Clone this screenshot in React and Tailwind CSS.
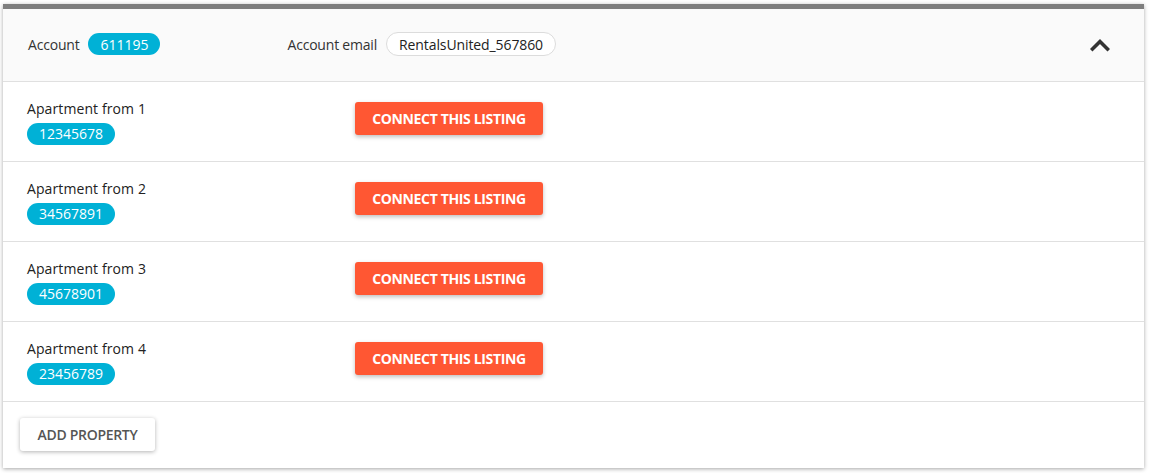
import React from "react";

const rows = [
  { name: "Apartment from 1", id: "12345678" },
  { name: "Apartment from 2", id: "34567891" },
  { name: "Apartment from 3", id: "45678901" },
  { name: "Apartment from 4", id: "23456789" },
];

export default function App() {
  return (
    <div className="w-[1150px] h-[473px] bg-white pt-[4px] pl-[3px]" style={{ fontFamily: '"Open Sans", "Noto Sans", sans-serif' }}>
      <div className="w-[1141px] h-[464px] bg-white border-t-[5px] border-[#7f7f7f] shadow-[0_1px_4px_rgba(0,0,0,0.35)] flex flex-col">
        <div className="h-[73px] bg-[#fafafa] border-b border-[#e0e0e0] flex items-center pl-[25px] pr-[34px] pb-[2px] text-[14px] text-[#333]">
          <span className="tracking-[-0.2px]">Account</span>
          <span className="ml-[9px] h-[22px] px-[12px] rounded-full bg-[#00b1d6] text-white flex items-center text-[14px]">611195</span>
          <span className="ml-[127px] tracking-[-0.2px]">Account email</span>
          <span className="ml-[9px] h-[24px] px-[12px] rounded-full border border-[#dcdcdc] bg-white text-[#222] flex items-center text-[14px] font-medium tracking-[-0.1px]">RentalsUnited_567860</span>
          <div className="flex-1" />
          <svg width="20" height="14" viewBox="0 0 20 14" className="mt-[1px]">
            <polyline points="2.5,11 10,3.5 17.5,11" fill="none" stroke="#333" strokeWidth="3.6" strokeLinecap="square" />
          </svg>
        </div>
        {rows.map((r) => (
          <div key={r.id} className="h-[80px] border-b border-[#e0e0e0] flex items-center pl-[24px] text-[#222]">
            <div className="w-[328px] flex flex-col items-start pt-[1px]">
              <span className="text-[14px] leading-[18px] tracking-[0.1px]">{r.name}</span>
              <span className="mt-[5px] h-[22px] px-[12px] rounded-full bg-[#00b1d6] text-white flex items-center text-[14px]">{r.id}</span>
            </div>
            <button className="h-[33px] w-[188px] -mt-[7px] rounded-[3px] bg-[#ff5733] text-white text-[14px] font-bold uppercase tracking-[-0.35px] shadow-[0_2px_4px_rgba(0,0,0,0.25)]">
              Connect this listing
            </button>
          </div>
        ))}
        <div className="flex-1 flex items-center pl-[17px] pb-[1px]">
          <button className="h-[33px] w-[135px] rounded-[3px] bg-white text-[#555] text-[14px] font-semibold uppercase tracking-[-0.3px] shadow-[0_1px_4px_rgba(0,0,0,0.3)]">
            Add property
          </button>
        </div>
      </div>
    </div>
  );
}
